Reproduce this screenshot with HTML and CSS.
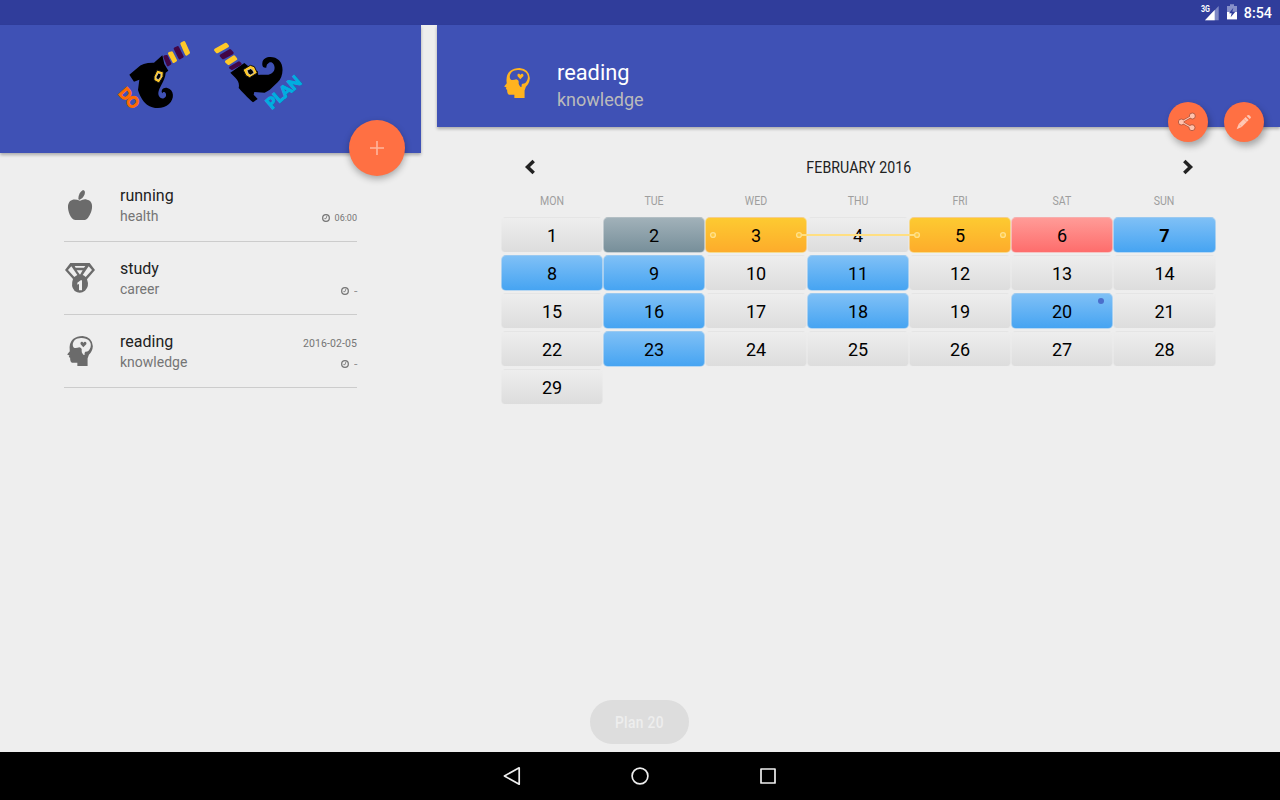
FILE: index.html
```html
<!DOCTYPE html>
<html lang="en">
<head>
<meta charset="utf-8">
<title>Do Plan</title>
<link rel="stylesheet" href="styles.css">
</head>
<body>
<svg class="defs" width="0" height="0" aria-hidden="true">
  <symbol id="head" viewBox="0 0 78 91">
    <path fill-rule="evenodd" d="M0 56L8 46Q4 22 18 9Q30 0 47 0Q76 3 78 31Q77 46 66 57L62 68V91H31V81H15Q9 79 9 66L5 64L7 59ZM17 27C18 40 29 36 37 34Q46 36 44 45Q43 50 49 57L53 58Q52 50 55 48Q66 49 71 34C76 17 61 5 42 6C27 7 18 13 17 27ZM49 34L41 25C38 16 47 15 49 21C53 14 61 18 58 25Z"/>
  </symbol>
  <symbol id="clock" viewBox="0 0 24 24">
    <circle cx="12" cy="12" r="10" fill="none" stroke="currentColor" stroke-width="3.8"/>
    <path d="M15 5L12 14H7" fill="none" stroke="currentColor" stroke-width="2.5"/>
  </symbol>
</svg>
<div class="status">
  <svg width="18" height="16" viewBox="0 0 54 48"><path d="M12 49L53 6V49Z" fill="#7d87c4"/><path d="M12 49L41 18V49Z" fill="#fff"/><text x="0" y="24" class="signal" textLength="27" lengthAdjust="spacingAndGlyphs">3G</text></svg>
  <svg class="battery" width="10" height="16" viewBox="0 0 30 48"><path d="M0 6H9V1H21V6H30V46H0Z" fill="#8790c9"/><path d="M0 24H30V46H0Z" fill="#fff"/><path d="M19 11L6 28H14L11 40L25 23H16Z" fill="#303d9b"/></svg>
  <span>8:54</span>
</div>
<main class="panes">
  <section class="list-pane">
    <header class="brand">
      <svg width="100" height="90" viewBox="0 0 300 270">
        <path d="M157 76L132 98Q98 97 83 113L58 134L72 155L88 149L84 180C88 193 95 211 111 224C132 239 161 237 177 222C194 207 193 179 172 174C160 171 151 182 157 190C161 181 172 190 167 200C158 212 144 202 145 189C146 172 165 154 167 128L175 122L163 102Z"/>
        <path d="M132 140L141 120L160 126L159 140L147 159L132 151Z" fill="#ffc928" stroke="#111" stroke-width="3"/><path d="M139 140L145 129L153 132L152 141L145 149L138 145Z" stroke="#ddd" stroke-width="2"/>
        <g stroke-width="8" stroke-linejoin="round"><path d="M164 80L170 79L180 101L174 105Z" fill="#430646" stroke="#430646"/><path d="M178 70L185 68L197 91L191 95Z" fill="#ffc928" stroke="#ffc928"/><path d="M195 56L203 52L217 80L209 84Z" fill="#430646" stroke="#430646"/><path d="M215 41L222 37L236 68L229 73Z" fill="#ffc928" stroke="#ffc928"/></g>
        <text class="logo-word" fill="#ff6a00" stroke="#ff6a00" font-size="47" transform="translate(23 191) rotate(48)" textLength="66" lengthAdjust="spacingAndGlyphs">DO</text>
      </svg>
      <svg width="105" height="90" viewBox="0 0 315 270">
        <path d="M76 128L118 99L130 109L158 124L160 135C180 133 197 139 207 122C213 108 203 92 192 98Q183 103 184 113Q170 114 172 99C174 77 208 76 222 91C239 108 234 142 218 157C205 169 194 183 179 188L148 186L146 194L158 207L144 217C130 205 107 181 101 174C104 160 99 151 91 143Z"/>
        <path d="M114 119L136 106L148 110L157 129L134 143L123 137Z" fill="#ffc928" stroke="#111" stroke-width="3"/><path d="M126 121L137 116L143 120L147 129L136 135L130 131Z" stroke="#ddd" stroke-width="2"/>
        <g stroke-width="8" stroke-linejoin="round"><path d="M31 60L63 42L68 48L36 66Z" fill="#ffc928" stroke="#ffc928"/><path d="M48 77L75 61L82 69L54 84Z" fill="#430646" stroke="#430646"/><path d="M64 95L87 80L93 87L71 101Z" fill="#ffc928" stroke="#ffc928"/><path d="M76 113L102 98L106 102L81 116Z" fill="#430646" stroke="#430646"/></g>
        <text class="logo-word" fill="#00aee0" stroke="#00aee0" font-size="47" transform="translate(200 240) rotate(-41)" textLength="123" lengthAdjust="spacingAndGlyphs">PLAN</text>
      </svg>
      <button class="fab add" aria-label="Add"><svg width="14" height="14" viewBox="0 0 14 14"><path d="M7 0V14M0 7H14" stroke="#ffb69e" stroke-width="1.6"/></svg></button>
    </header>
    <div class="items">
      <article class="item">
        <svg class="item-icon" width="32" height="32" viewBox="0 0 96 96"><path d="M43 29Q44 10 57 3Q65 4 62 16Q58 28 45 33ZM48 35C55 33 61 29 69 32C86 35 87 53 81 70Q72 92 63 93H34C19 91 11 65 12 51C14 31 30 27 48 35Z"/></svg>
        <div class="copy"><h2>running</h2><p>health</p></div>
        <div class="meta"><span class="time"><svg width="8" height="8"><use href="#clock"/></svg>06:00</span></div>
      </article>
      <article class="item">
        <svg class="item-icon" width="32" height="32" viewBox="0 0 96 96"><path fill-rule="evenodd" d="M19 3H77L93 24L69 52Q77 73 63 86Q48 98 32 87Q19 73 27 51L3 24ZM12 24L31 45Q35 42 40 39L22 13ZM74 13L56 39Q61 41 65 45L84 24ZM32 12L35 17H60L64 12ZM38 25L48 38L56 25ZM50 55L40 62V68L45 66V85H54V55Z"/></svg>
        <div class="copy"><h2>study</h2><p>career</p></div>
        <div class="meta"><span class="time"><svg width="8" height="8"><use href="#clock"/></svg><span class="dash">-</span></span></div>
      </article>
      <article class="item">
        <svg class="item-icon portrait" width="32" height="30"><use href="#head"/></svg>
        <div class="copy"><h2>reading</h2><p>knowledge</p></div>
        <div class="meta"><span class="date">2016-02-05</span><span class="time"><svg width="8" height="8"><use href="#clock"/></svg><span class="dash">-</span></span></div>
      </article>
    </div>
  </section>
  <section class="detail-pane">
    <header class="detail-header">
      <svg width="26" height="30" fill="#ffb31f"><use href="#head"/></svg>
      <div><h1>reading</h1><p>knowledge</p></div>
      <div class="actions">
        <button class="fab small" aria-label="Share"><svg width="20" height="20" viewBox="0 0 60 60"><path d="M43 12L10 30L42 47" fill="none" stroke="#a94f37" stroke-width="7"/><g fill="#ffc3ae" stroke="#a94f37" stroke-width="2.5"><circle cx="43" cy="12" r="9"/><circle cx="10" cy="30" r="9"/><circle cx="42" cy="47" r="9"/></g><path d="M37 15L16 27M16 33L36 44" stroke="#ffc3ae" stroke-width="3.5"/></svg></button>
        <button class="fab small" aria-label="Edit"><svg width="16" height="16" viewBox="0 0 48 48"><path d="M2 46L8 30L29 9L38 18L17 39Z" fill="#ffc7b4"/><path d="M32 6Q36 1 40 4L44 8Q47 11 41 15Z" fill="#ffc7b4"/><path d="M11 32L16 38M23 15L32 24" stroke="#ff9774" stroke-width="2"/></svg></button>
      </div>
    </header>
    <div class="calendar">
      <div class="month">
        <svg width="12" height="16" viewBox="0 0 12 16"><path d="M9.7 2L3.5 8L9.7 14" fill="none" stroke="#222" stroke-width="3.5"/></svg>
        <span class="month-name">FEBRUARY 2016</span>
        <svg width="12" height="16" viewBox="0 0 12 16"><path d="M2.3 2L8.5 8L2.3 14" fill="none" stroke="#222" stroke-width="3.5"/></svg>
      </div>
      <div class="weekdays"><span>MON</span><span>TUE</span><span>WED</span><span>THU</span><span>FRI</span><span>SAT</span><span>SUN</span></div>
      <div class="days">
        <b>1</b><b class="slate">2</b><b class="amber">3</b><b>4</b><b class="amber">5</b><b class="red">6</b><b class="blue today">7</b>
        <b class="blue">8</b><b class="blue">9</b><b>10</b><b class="blue">11</b><b>12</b><b>13</b><b>14</b>
        <b>15</b><b class="blue">16</b><b>17</b><b class="blue">18</b><b>19</b><b class="blue dot">20</b><b>21</b>
        <b>22</b><b class="blue">23</b><b>24</b><b>25</b><b>26</b><b>27</b><b>28</b>
        <b>29</b>
        <svg class="streak" width="298" height="8" viewBox="0 0 298 8"><path d="M93 4H205" stroke="#ffdf82" stroke-width="2"/><g fill="#ffc83e" stroke="#ffe08a" stroke-width="1.4"><circle cx="4" cy="4" r="2.4"/><circle cx="90" cy="4" r="2.4"/><circle cx="208" cy="4" r="2.4"/><circle cx="294" cy="4" r="2.4"/></g></svg>
      </div>
    </div>
  </section>
</main>
<div class="toast"><span>Plan 20</span></div>
<nav class="navbar">
  <svg width="20" height="20" viewBox="0 0 20 20"><path d="M2.4 10L17.2 1.8V18.2Z"/></svg>
  <svg width="20" height="20" viewBox="0 0 20 20"><circle cx="10" cy="10" r="7.9"/></svg>
  <svg width="20" height="20" viewBox="0 0 20 20"><rect x="3" y="3" width="14" height="14"/></svg>
</nav>
</body>
</html>
```
FILE: styles.css
```css
* { box-sizing: border-box; }
body { margin: 0; width: 1280px; height: 800px; overflow: hidden; display: flex; flex-direction: column; position: relative; background: #eee; font-family: Roboto, sans-serif; color: #212121; }
h1, h2, p { margin: 0; font-weight: 400; }
svg { display: block; flex: none; overflow: visible; }
.defs { position: absolute; }
.status { height: 25px; flex: none; background: #303d9b; color: #fff; display: flex; justify-content: flex-end; align-items: center; padding: 1px 8px 0 0; font-size: 14.3px; font-weight: 500; }
.status svg { margin-top: -2px; margin-right: 8px; }
.status .battery { margin-right: 7px; }
.signal { font: 700 25px Roboto, sans-serif; fill: #fff; }
.panes { flex: 1; display: flex; gap: 16px; min-height: 0; }
.list-pane { width: 421px; }
.brand { height: 128px; background: #3f51b5; display: flex; padding: 5px 0 0 110px; position: relative; box-shadow: 0 2px 3px rgba(0,0,0,.28); }
.brand > svg + svg { margin-left: -5px; }
.logo-word { font-family: Lato, sans-serif; font-weight: 900; stroke-width: 3; }
.fab { border: 0; padding: 0; border-radius: 50%; background: #ff7043; display: flex; align-items: center; justify-content: center; box-shadow: 0 3px 7px rgba(0,0,0,.3); }
.add { position: absolute; right: 16px; bottom: -23px; width: 56px; height: 56px; }
.items { padding: 15px 64px 0; }
.item { height: 73px; border-bottom: 1px solid #ccc; display: flex; padding-top: 20px; }
.item-icon { fill: #6b6b6b; }
.portrait { margin-top: 1px; }
.copy { margin-left: 24px; flex: 1; padding-top: 2px; }
.item h2 { font-size: 16px; line-height: 19px; margin-top: -5px; }
.item p { font-size: 14px; line-height: 17px; margin-top: 3px; color: #757575; }
.item:first-child { height: 74px; padding-top: 21px; }
.meta { display: flex; flex-direction: column; align-items: flex-end; height: 36px; padding-top: 2px; color: #757575; }
.date { font-size: 10.5px; line-height: 14px; letter-spacing: .1px; }
.time { display: flex; align-items: center; gap: 5px; font-size: 9px; line-height: 14px; margin-top: auto; }
.dash { transform: scaleX(1.4); transform-origin: right; padding-left: 1px; }
.detail-pane { flex: 1; }
.detail-header { height: 102px; background: #3f51b5; color: #fff; padding: 35px 0 0 67px; display: flex; align-items: flex-start; gap: 27px; position: relative; box-shadow: 0 2px 3px rgba(0,0,0,.28); }
.detail-header > svg { margin-top: 8px; }
.detail-header h1 { font-size: 21.8px; line-height: 26px; }
.detail-header p { font-size: 18px; line-height: 22px; margin-top: 3px; color: #bbb; }
.actions { position: absolute; right: 16px; bottom: -15px; display: flex; gap: 16px; }
.small { width: 40px; height: 40px; box-shadow: 2px 4px 7px rgba(0,0,0,.3); }
.calendar { padding: 28px 64px 0; }
.month { display: flex; justify-content: space-between; align-items: center; height: 24px; padding: 0 22px 0 23px; }
.month-name { font-size: 16px; transform: translateX(-.5px) scaleX(.885); letter-spacing: .1px; }
.weekdays { display: grid; grid-template-columns: repeat(7, 102px); margin-top: 12px; height: 20px; line-height: 20px; text-align: center; font-size: 12px; color: #9e9e9e; }
.weekdays span { transform: scaleX(.88); }
.days { display: grid; grid-template-columns: repeat(6, 102px) 103px; grid-auto-rows: 36px; row-gap: 2px; margin-top: 6px; position: relative; }
.days b { display: flex; align-items: center; justify-content: center; padding-top: 1px; border: 1px solid rgba(238,238,238,.5); border-radius: 5px; background: linear-gradient(#eee, #ddd); color: #000; font-size: 18px; font-weight: 400; position: relative; }
.days .blue { background: linear-gradient(#7fc0f6, #46a4f2); }
.days .slate { background: linear-gradient(#a1b1b9, #778f9a); }
.days .amber { background: linear-gradient(#fdca31, #fdac2b); }
.days .red { background: linear-gradient(#ff9b97, #fe6d6c); }
.days .today { font-weight: 700; }
.dot::after { content: ""; position: absolute; right: 8px; top: 4px; width: 6px; height: 6px; border-radius: 50%; background: #4a6ecb; }
.streak { position: absolute; left: 208px; top: 14px; }
.toast { position: absolute; left: 590px; top: 700px; width: 99px; height: 44px; border-radius: 22px; background: #ddd; color: #eee; display: flex; align-items: center; justify-content: center; font-size: 16px; font-weight: 500; padding-top: 1px; }
.toast span { transform: scaleX(.86); letter-spacing: .4px; white-space: nowrap; }
.navbar { height: 48px; flex: none; background: #000; display: flex; align-items: center; justify-content: center; gap: 108px; }
.navbar svg { fill: none; stroke: #eee; stroke-width: 1.7; stroke-linejoin: round; }
```
